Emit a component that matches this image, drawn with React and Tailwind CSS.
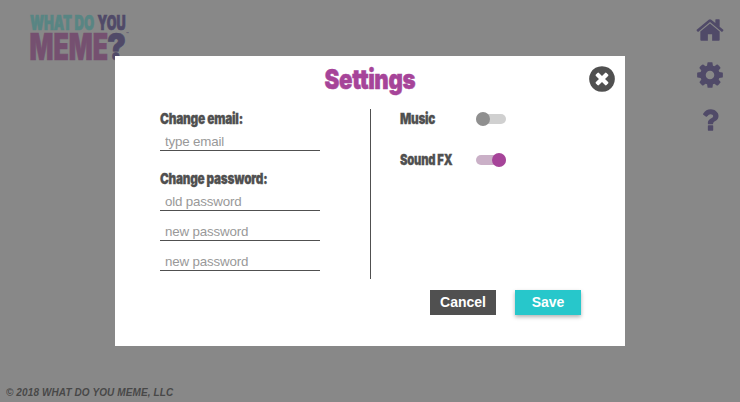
const ICONS = {
  home: 'M1472 992v480q0 26-19 45t-45 19h-384v-384h-256v384h-384q-26 0-45-19t-19-45v-480q0-1 .5-3t.5-3l575-474 575 474q1 2 1 6zm223-69l-62 74q-8 9-21 11h-3q-13 0-21-7l-692-577-692 577q-12 8-24 7-13-2-21-11l-62-74q-8-10-7-23.5t11-21.5l719-599q32-26 76-26t76 26l244 204v-195q0-14 9-23t23-9h192q14 0 23 9t9 23v408l219 182q10 8 11 21.5t-7 23.5z',
  cog: 'M1152 896q0-106-75-181t-181-75-181 75-75 181 75 181 181 75 181-75 75-181zm512-109v222q0 12-8 23t-20 13l-185 28q-19 54-39 91 35 50 107 138 10 12 10 25t-9 23q-27 37-99 108t-94 71q-12 0-26-9l-138-108q-44 23-91 38-16 136-29 186-7 28-36 28h-222q-14 0-24.5-8.5t-11.5-21.5l-28-184q-49-16-90-37l-141 107q-10 9-25 9-14 0-25-11-126-114-165-168-7-10-7-23 0-12 8-23 15-21 51-66.5t54-70.5q-27-50-41-99l-183-27q-13-2-21-12.5t-8-23.5v-222q0-12 8-23t19-13l186-28q14-46 39-92-40-57-107-138-10-12-10-24 0-10 9-23 26-36 98.5-107.5t94.5-71.5q13 0 26 10l138 107q44-23 91-38 16-136 29-186 7-28 36-28h222q14 0 24.5 8.5t11.5 21.5l28 184q49 16 90 37l142-107q9-9 24-9 13 0 25 10 129 119 165 170 7 8 7 22 0 12-8 23-15 21-51 66.5t-54 70.5q26 50 41 98l183 28q13 2 21 12.5t8 23.5z',
  question: 'M1088 1256v240q0 16-12 28t-28 12h-240q-16 0-28-12t-12-28v-240q0-16 12-28t28-12h240q16 0 28 12t12 28zm316-600q0 54-15.5 101t-35 76.5-55 59.5-57.5 43.5-61 35.5q-41 23-68.5 65t-27.5 67q0 17-12 32.5t-28 15.5h-240q-15 0-25.5-18.5t-10.5-37.5v-45q0-83 65-156.5t143-108.5q59-27 84-56t25-76q0-42-46.5-74t-107.5-32q-65 0-108 29-35 25-107 115-13 16-31 16-12 0-25-8l-164-125q-13-10-15.5-25t5.5-28q160-266 464-266 80 0 161 31t146 83 106 127.5 41 158.5z',
  close: 'M1277 1122q0-26-19-45l-181-181 181-181q19-19 19-45 0-27-19-46l-90-90q-19-19-46-19-26 0-45 19l-181 181-181-181q-19-19-45-19-27 0-46 19l-90 90q-19 19-19 46 0 26 19 45l181 181-181 181q-19 19-19 45 0 27 19 46l90 90q19 19 46 19 26 0 45-19l181-181 181 181q19 19 45 19 27 0 46-19l90-90q19-19 19-46zm387-226q0 209-103 385.5t-279.5 279.5-385.5 103-385.5-103-279.5-279.5-103-385.5 103-385.5 279.5-279.5 385.5-103 385.5 103 279.5 279.5 103 385.5z',
};

function Icon({ name }) {
  return (
    <svg viewBox="0 0 1792 1792" className="block size-[30px] fill-current" aria-hidden="true">
      <path d={ICONS[name]} />
    </svg>
  );
}

function Logo() {
  const fit = { lengthAdjust: 'spacingAndGlyphs', fontFamily: 'Inter, sans-serif', fontWeight: 900 };
  return (
    <svg width="112" height="60" viewBox="0 0 112 60" className="block overflow-visible">
      <g strokeWidth="0.7">
        <text x="0" y="14.5" fontSize="19.5" textLength="64" fill="#588583" stroke="#588583" {...fit}>WHAT DO</text>
        <text x="67.5" y="14.5" fontSize="19.5" textLength="28" fill="#504a68" stroke="#504a68" {...fit}>YOU</text>
        <text x="-0.5" y="44.7" fontSize="36.5" textLength="78.5" fill="#755070" stroke="#755070" {...fit}>MEME</text>
        <text x="77" y="44.7" fontSize="37.5" textLength="19" fill="#504a68" stroke="#504a68" {...fit}>?</text>
      </g>
      <text x="96" y="21" fontSize="4.5" fill="#504a68" fontFamily="Inter, sans-serif">™</text>
    </svg>
  );
}

function Label({ children, scale = 'scale-x-[0.785]' }) {
  return (
    <span className={`block h-5 w-max origin-left whitespace-nowrap font-['Inter',sans-serif] text-[15px] leading-5 font-black tracking-[-0.3px] text-[#505050] [-webkit-text-stroke:0.3px_#505050] ${scale}`}>
      {children}
    </span>
  );
}

function Field({ placeholder, type = 'text' }) {
  return (
    <input
      type={type}
      placeholder={placeholder}
      className="block h-5 w-40 rounded-none border-b border-[#505050] bg-transparent px-[5px] pt-px text-[13.33px] leading-[18px] tracking-[-0.17px] outline-none placeholder:text-[#999]"
    />
  );
}

function Toggle({ on }) {
  return (
    <span className={`flex h-[10px] w-[30px] items-center rounded-full ${on ? 'justify-end bg-[#cab0c7]' : 'justify-start bg-[#d0d0d0]'}`}>
      <span className={`size-[14px] shrink-0 rounded-full ${on ? 'bg-[#a64499]' : 'bg-[#8f8f8f]'}`} />
    </span>
  );
}

export default function App() {
  return (
    <div className="relative flex h-[402px] w-[740px] flex-col justify-between overflow-hidden bg-[#888] font-['Liberation_Sans',Arial,sans-serif]">
      <header className="flex justify-between pt-[15px] pr-[15px] pl-[30px]">
        <Logo />
        <nav className="flex flex-col gap-[15px] text-[#504a68]">
          <Icon name="home" />
          <Icon name="cog" />
          <Icon name="question" />
        </nav>
      </header>
      <footer className="pb-[2px] pl-[6px] text-[10px] leading-[14px] font-bold tracking-[0.11px] text-[#484848] italic">
        © 2018 WHAT DO YOU MEME, LLC
      </footer>

      <div role="dialog" className="absolute top-[56px] left-[115px] flex h-[290px] w-[510px] flex-col bg-white">
        <div className="grid h-[53px] grid-cols-[1fr_auto_1fr] items-start px-2 pt-2">
          <span />
          <h1 className="h-8 origin-center scale-x-[0.81] -mx-6 font-['Inter',sans-serif] text-[27.5px] leading-[30px] font-black tracking-[-0.5px] text-[#a64499] [-webkit-text-stroke:0.5px_#a64499]">
            Settings
          </h1>
          <button className="justify-self-end text-[#505050]" aria-label="Close">
            <Icon name="close" />
          </button>
        </div>
        <div className="flex h-[170px] pl-[45px]">
          <section className="w-[210px]">
            <Label scale="scale-x-[0.795]">Change email:</Label>
            <div className="mt-[2px]"><Field placeholder="type email" /></div>
            <div className="mt-[18px]"><Label>Change password:</Label></div>
            <div className="mt-[2px] flex flex-col gap-[10px]">
              <Field placeholder="old password" />
              <Field placeholder="new password" />
              <Field placeholder="new password" />
            </div>
          </section>
          <section className="flex-1 border-l border-[#505050] pl-[29px]">
            <div className="flex h-5 items-center">
              <div className="w-[76px]"><Label>Music</Label></div>
              <Toggle />
            </div>
            <div className="mt-[21px] flex h-5 items-center">
              <div className="w-[76px]"><Label scale="scale-x-[0.75]">Sound FX</Label></div>
              <Toggle on />
            </div>
          </section>
        </div>
        <div className="mt-[11px] flex justify-end gap-[19px] pr-[44px] text-sm font-bold text-white">
          <button className="h-[25px] w-[66px] bg-[#505050] leading-[25px]">Cancel</button>
          <button className="h-[25px] w-[66px] bg-[#27c7cb] leading-[25px] shadow-[0_2px_4px_rgba(0,0,0,0.3)]">Save</button>
        </div>
      </div>
    </div>
  );
}
